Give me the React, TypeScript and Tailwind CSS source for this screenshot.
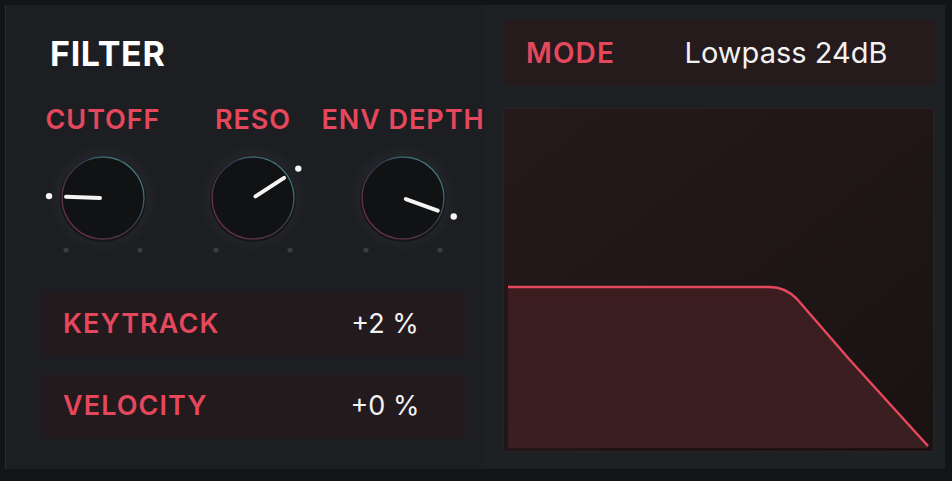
import React from 'react';

const CORAL = '#e5485d';

interface KnobProps {
  label: string;
  angle: number; // degrees, screen coords (0 = right, 90 = down)
}

function Knob({ label, angle }: KnobProps) {
  const cx = 65;
  const cy = 56;
  const rad = (angle * Math.PI) / 180;
  const pt = (r: number) => ({ x: cx + r * Math.cos(rad), y: cy + r * Math.sin(rad) });
  const a = pt(3);
  const b = pt(37);
  const dot = pt(54);
  const gid = `rim-${label.replace(/\s/g, '')}`;

  return (
    <div className="flex w-[150px] flex-col items-center">
      <div
        className="whitespace-nowrap text-[27px] font-semibold leading-[27px] tracking-[0.035em]"
        style={{ color: CORAL }}
      >
        {label}
      </div>
      <svg className="mt-[9px]" width="130" height="112" viewBox="0 0 130 112">
        <defs>
          <linearGradient id={gid} x1="1" y1="0" x2="0" y2="1">
            <stop offset="0%" stopColor="#4a9995" />
            <stop offset="45%" stopColor="#33364a" />
            <stop offset="100%" stopColor="#7a3040" />
          </linearGradient>
          <radialGradient id={`${gid}-halo`} cx="0.5" cy="0.5" r="0.5">
            <stop offset="78%" stopColor="#232427" />
            <stop offset="100%" stopColor="#1e1f22" />
          </radialGradient>
        </defs>
        <circle cx={cx} cy={cy} r="53" fill={`url(#${gid}-halo)`} />
        <circle cx={cx} cy={cy + 1} r="43" fill="#151618" />
        <circle cx={cx} cy={cy} r="41" fill="#111214" stroke={`url(#${gid})`} strokeWidth="1.4" />
        <line x1={a.x} y1={a.y} x2={b.x} y2={b.y} stroke="#f4f4f4" strokeWidth="4" strokeLinecap="round" />
        <circle cx={dot.x} cy={dot.y} r="3.2" fill="#f6f6f6" />
        <circle cx={cx - 37} cy={108} r="2.6" fill="#3a3c40" />
        <circle cx={cx + 37} cy={108} r="2.6" fill="#3a3c40" />
      </svg>
    </div>
  );
}

function ValueRow({ label, value }: { label: string; value: string }) {
  return (
    <div className="flex h-[64px] items-center rounded-[3px] bg-[#221a1c] pl-[21px]">
      <div className="flex-1 text-[27px] font-semibold tracking-[0.04em]" style={{ color: CORAL }}>
        {label}
      </div>
      <div className="mr-[15px] w-[130px] text-center text-[27px] text-[#f2f2f2]">{value}</div>
    </div>
  );
}

function FilterGraph() {
  return (
    <div className="h-[344px] w-[431px] overflow-hidden rounded-[3px] border border-[#2a2224] bg-[#201617]">
      <svg width="431" height="342" viewBox="0 0 431 342">
        <defs>
          <linearGradient id="graphBg" x1="0" y1="0" x2="1" y2="1">
            <stop offset="0%" stopColor="#251a1b" />
            <stop offset="100%" stopColor="#1a1212" />
          </linearGradient>
          <linearGradient id="graphFill" x1="0" y1="0" x2="0" y2="1">
            <stop offset="0%" stopColor="#3b1d1f" />
            <stop offset="100%" stopColor="#3a1f20" />
          </linearGradient>
        </defs>
        <rect width="431" height="342" fill="url(#graphBg)" />
        <path
          d="M4 339 L4 178 L266 178 C277 178 285 182 293 190 L345 250 L424 337 L424 339 Z"
          fill="url(#graphFill)"
        />
        <path
          d="M4 178 L266 178 C277 178 285 182 293 190 L345 250 L424 337"
          fill="none"
          stroke={CORAL}
          strokeWidth="2.5"
        />
      </svg>
    </div>
  );
}

export default function App() {
  return (
    <div
      className="h-[481px] w-[952px] overflow-hidden bg-[#131416] pl-[5px] pt-[5px]"
      style={{ fontFamily: 'Inter, "Open Sans", sans-serif' }}
    >
      <div className="flex h-[464px] w-[940px] border-l border-[#2a2b2e] bg-[#1d1e21]">
        {/* left column */}
        <div className="flex w-[480px] flex-col pl-[22px] pt-[32px]">
          <div className="ml-[22px] text-[34px] font-bold leading-[34px] tracking-[0.02em] text-white">
            FILTER
          </div>

          <div className="mt-[35px] flex">
            <Knob label="CUTOFF" angle={182} />
            <Knob label="RESO" angle={-33} />
            <Knob label="ENV DEPTH" angle={20} />
          </div>

          <div className="ml-[14px] mt-[38px] flex w-[423px] flex-col gap-[18px]">
            <ValueRow label="KEYTRACK" value="+2 %" />
            <ValueRow label="VELOCITY" value="+0 %" />
          </div>
        </div>

        {/* right column */}
        <div className="flex flex-1 flex-col gap-[22px] bg-[#1e2124] pl-[17px] pt-[15px]">
          <div className="flex h-[66px] w-[433px] items-center rounded-[3px] bg-[#251a1c] pl-[23px]">
            <div className="flex-1 text-[28px] font-semibold tracking-[0.04em]" style={{ color: CORAL }}>
              MODE
            </div>
            <div className="mr-[30px] w-[240px] text-center text-[29px] text-[#f2f2f2]">
              Lowpass 24dB
            </div>
          </div>
          <FilterGraph />
        </div>
      </div>
    </div>
  );
}
